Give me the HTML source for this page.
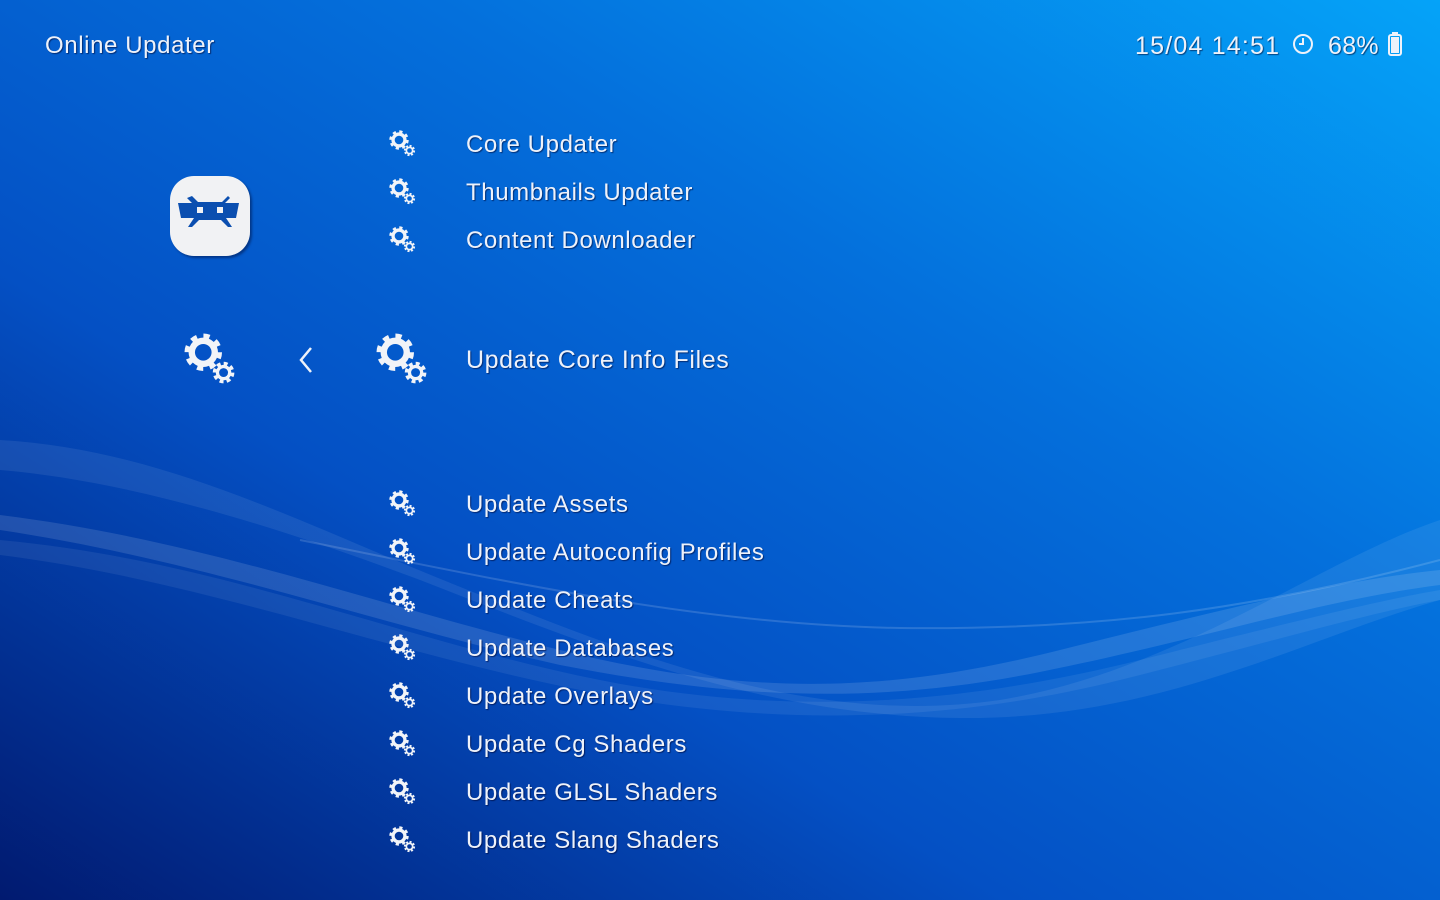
<!DOCTYPE html>
<html><head><meta charset="utf-8"><style>
html,body{margin:0;padding:0;width:1440px;height:900px;overflow:hidden}
body{position:relative;background:#0453c8;font-family:"Liberation Sans",sans-serif;color:#eef2fa}
#bg{position:absolute;left:0;top:0;width:1440px;height:900px}
.t{position:absolute;font-size:24px;letter-spacing:.6px;white-space:nowrap;text-shadow:1px 1px 1px rgba(0,0,40,.55);line-height:1}
.g{position:absolute;width:30px;height:30px}
</style></head><body>
<svg id="bg" width="1440" height="900" viewBox="0 0 1440 900">
<defs>
<linearGradient id="bgA" x1="1" y1="0" x2="0" y2="1">
<stop offset="0" stop-color="#05a3f8"/><stop offset=".35" stop-color="#0470dc"/><stop offset=".65" stop-color="#0450c4"/><stop offset="1" stop-color="#011a70"/>
</linearGradient>
<mask id="gm" maskUnits="userSpaceOnUse" x="0" y="0" width="30" height="30">
<circle cx="11" cy="11" r="7.6" fill="#fff"/>
<circle cx="11" cy="11" r="8.4" fill="none" stroke="#fff" stroke-width="2.6" stroke-dasharray="3.2 3.4"/>
<circle cx="11" cy="11" r="4.3" fill="#000"/>
<circle cx="21.5" cy="21.5" r="5" fill="#000"/>
<circle cx="21.5" cy="21.5" r="4" fill="#fff"/>
<circle cx="21.5" cy="21.5" r="4.6" fill="none" stroke="#fff" stroke-width="2" stroke-dasharray="2 1.6"/>
<circle cx="21.5" cy="21.5" r="2.3" fill="#000"/>
</mask>
<symbol id="gear" viewBox="0 0 30 30"><rect width="30" height="30" fill="#f2f4f8" mask="url(#gm)"/></symbol>
</defs>
<rect width="1440" height="900" fill="url(#bgA)"/>
<g fill="#fff">
<path d="M0 440 C180 450 330 540 520 610 C720 690 860 720 1000 700 C1180 670 1320 560 1440 520 L1440 600 C1300 640 1160 720 960 718 C760 716 600 650 420 580 C260 520 120 480 0 470Z" opacity=".08"/>
<path d="M0 515 C200 540 360 600 560 650 C760 700 900 690 1060 650 C1220 610 1340 580 1440 570 L1440 585 C1320 600 1200 640 1040 672 C880 704 740 700 560 665 C380 625 200 560 0 530Z" opacity=".12"/>
<path d="M0 540 C220 560 400 640 600 680 C800 720 980 700 1140 660 C1280 625 1380 600 1440 590 L1440 600 C1360 615 1260 645 1120 680 C960 720 780 730 580 690 C380 650 200 580 0 555Z" opacity=".07"/>
<path d="M300 540 C500 580 700 625 900 628 C1100 630 1250 610 1440 560" fill="none" stroke="#fff" stroke-width="2" opacity=".15"/>
</g>
</svg>

<div class="t" style="left:45px;top:34px">Online Updater</div>
<div class="t" style="left:1135px;top:34px;font-size:25px;letter-spacing:1.2px">15/04 14:51</div>
<svg style="position:absolute;left:1292px;top:33px" width="22" height="22" viewBox="0 0 22 22"><circle cx="11" cy="11" r="9" fill="none" stroke="#eef2fa" stroke-width="2"/><path d="M11 5v6H7" fill="none" stroke="#eef2fa" stroke-width="2"/></svg>
<div class="t" style="left:1328px;top:34px;font-size:25px;letter-spacing:.3px">68%</div>
<svg style="position:absolute;left:1387px;top:32px" width="16" height="24" viewBox="0 0 16 24"><rect x="5" y="0" width="6" height="3" fill="#eef2fa"/><rect x="2" y="3" width="12" height="20" rx="2" fill="none" stroke="#eef2fa" stroke-width="2"/><rect x="4" y="5" width="8" height="16" fill="#eef2fa"/></svg>

<div style="position:absolute;left:170px;top:176px;width:80px;height:80px;border-radius:24px;background:#f1f2f4;box-shadow:2px 2px 2px rgba(0,20,70,.5)"></div>
<svg style="position:absolute;left:176px;top:194px" width="68" height="40" viewBox="0 0 68 40">
<g fill="#0b4fb0">
<path d="M16 2l6 6h24l6-6 2 2-5 5h14l-3 15H50l6 9-4 0-7-7H23l-7 7-4 0 6-9H5L2 9h14l-5-5z"/>
</g>
<rect x="21" y="13" width="6" height="6" fill="#f1f2f4"/><rect x="41" y="13" width="6" height="6" fill="#f1f2f4"/>
</svg>

<svg class="g" style="left:388px;top:129px"><use href="#gear" width="30" height="30"/></svg>
<svg class="g" style="left:388px;top:177px"><use href="#gear" width="30" height="30"/></svg>
<svg class="g" style="left:388px;top:225px"><use href="#gear" width="30" height="30"/></svg>
<svg class="g" style="left:388px;top:489px"><use href="#gear" width="30" height="30"/></svg>
<svg class="g" style="left:388px;top:537px"><use href="#gear" width="30" height="30"/></svg>
<svg class="g" style="left:388px;top:585px"><use href="#gear" width="30" height="30"/></svg>
<svg class="g" style="left:388px;top:633px"><use href="#gear" width="30" height="30"/></svg>
<svg class="g" style="left:388px;top:681px"><use href="#gear" width="30" height="30"/></svg>
<svg class="g" style="left:388px;top:729px"><use href="#gear" width="30" height="30"/></svg>
<svg class="g" style="left:388px;top:777px"><use href="#gear" width="30" height="30"/></svg>
<svg class="g" style="left:388px;top:825px"><use href="#gear" width="30" height="30"/></svg>

<svg style="position:absolute;left:182px;top:331px" width="58" height="58"><use href="#gear" width="58" height="58"/></svg>
<svg style="position:absolute;left:374px;top:331px" width="58" height="58"><use href="#gear" width="58" height="58"/></svg>
<svg style="position:absolute;left:296px;top:346px" width="20" height="28" viewBox="0 0 20 28"><path d="M15 2L5 14l10 12" fill="none" stroke="#eef2fa" stroke-width="2.5"/></svg>

<div class="t" style="left:466px;top:133px">Core Updater</div>
<div class="t" style="left:466px;top:181px">Thumbnails Updater</div>
<div class="t" style="left:466px;top:229px">Content Downloader</div>
<div class="t" style="left:466px;top:348px;font-size:25px">Update Core Info Files</div>
<div class="t" style="left:466px;top:493px">Update Assets</div>
<div class="t" style="left:466px;top:541px">Update Autoconfig Profiles</div>
<div class="t" style="left:466px;top:589px">Update Cheats</div>
<div class="t" style="left:466px;top:637px">Update Databases</div>
<div class="t" style="left:466px;top:685px">Update Overlays</div>
<div class="t" style="left:466px;top:733px">Update Cg Shaders</div>
<div class="t" style="left:466px;top:781px">Update GLSL Shaders</div>
<div class="t" style="left:466px;top:829px">Update Slang Shaders</div>
</body></html>
